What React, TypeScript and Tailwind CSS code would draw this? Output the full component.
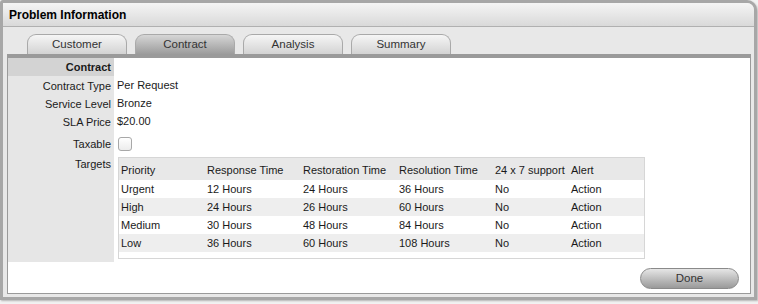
import React from "react";

const tabs = ["Customer", "Contract", "Analysis", "Summary"];

const rows = [
  ["Urgent", "12 Hours", "24 Hours", "36 Hours", "No", "Action"],
  ["High", "24 Hours", "26 Hours", "60 Hours", "No", "Action"],
  ["Medium", "30 Hours", "48 Hours", "84 Hours", "No", "Action"],
  ["Low", "36 Hours", "60 Hours", "108 Hours", "No", "Action"],
];

const cols = ["w-[86px]", "w-[96px]", "w-[96px]", "w-[96px]", "w-[76px]", "flex-1"];
const heads = ["Priority", "Response Time", "Restoration Time", "Resolution Time", "24 x 7 support", "Alert"];

function Field({ label, children, h = "h-[18px] leading-[18px]" }: { label: string; children?: React.ReactNode; h?: string }) {
  return (
    <div className={`flex ${h}`}>
      <div className="w-[106px] bg-[#e6e6e6] text-right pr-[3px]">{label}</div>
      <div className="flex-1 pl-[3px] flex items-center">{children}</div>
    </div>
  );
}

export default function App() {
  return (
    <div className="w-[758px] h-[304px] bg-[#f2f2f2] text-[11px] text-[#1a1a1a] whitespace-nowrap font-['Liberation_Sans',Arial,sans-serif]">
      <div className="w-[757px] h-[300px] border-[3px] border-[#a7a7a7] rounded-tr-[10px] rounded-tl-[3px] bg-[#e8e8e8] flex flex-col shadow-[1px_1px_2px_rgba(0,0,0,0.25)]">
        <div className="h-[24px] shrink-0 bg-gradient-to-b from-[#f5f5f5] to-[#d9d9d9] border-b border-[#b0b0b0] rounded-tr-[7px] pl-[6px] pt-[1px] flex items-center font-bold text-[12px] text-black">
          Problem Information
        </div>
        <div className="h-[27px] shrink-0 flex items-end pl-[24px] gap-[8px]">
          {tabs.map((t) => (
            <div
              key={t}
              className={`w-[100px] h-[20px] rounded-t-[9px] border border-b-0 border-[#a9a9a9] flex items-center justify-center text-[#333] text-[11.5px] bg-gradient-to-b ${
                t === "Contract" ? "from-[#d6d6d6] to-[#9c9c9c]" : "from-[#f6f6f6] to-[#d3d3d3]"
              }`}
            >
              {t}
            </div>
          ))}
        </div>
        <div className="flex-1 ml-[4px] mr-[3px] mb-[3px] bg-white border border-[#9a9a9a] border-t-[4px] flex flex-col">
          <div className="flex h-[18px]">
            <div className="w-[106px] bg-[#d3d3d3] text-right pr-[3px] font-bold leading-[19px]">Contract</div>
          </div>
          <Field label="Contract Type" h="h-[18px] leading-[20px]">Per Request</Field>
          <Field label="Service Level" h="h-[18px] leading-[20px]">Bronze</Field>
          <Field label="SLA Price" h="h-[18px] leading-[20px]">$20.00</Field>
          <Field label="Taxable" h="h-[24px] leading-[28px]">
            <div className="w-[14px] h-[14px] ml-[1px] mt-[4px] border border-[#a8a8a8] rounded-[3px] bg-gradient-to-b from-white to-[#ececec]" />
          </Field>
          <div className="flex h-[108px]">
            <div className="w-[106px] bg-[#e6e6e6] text-right pr-[3px] leading-[18px] pt-[1px]">Targets</div>
            <div className="flex-1 pl-[4px] pt-[3px]">
              <div className="w-[527px] h-[102px] border border-[#d6d6d6] bg-white">
                <div className="flex h-[22px] bg-[#e8e8e8] items-center pl-[2px] pt-[2px]">
                  {heads.map((h, i) => (
                    <div key={h} className={cols[i]}>{h}</div>
                  ))}
                </div>
                {rows.map((r, ri) => (
                  <div key={ri} className={`flex h-[18px] items-center pl-[2px] pt-[1px] ${ri % 2 ? "bg-[#eeeeee]" : "bg-white"}`}>
                    {r.map((c, i) => (
                      <div key={i} className={cols[i]}>{c}</div>
                    ))}
                  </div>
                ))}
              </div>
            </div>
          </div>
          <div className="flex-1 flex items-end justify-end pr-[11px] pb-[4px]">
            <button className="w-[99px] h-[21px] rounded-full border border-[#8a8a8a] bg-gradient-to-b from-[#e6e6e6] to-[#9a9a9a] text-[#333] text-[11.5px]">
              Done
            </button>
          </div>
        </div>
      </div>
    </div>
  );
}
